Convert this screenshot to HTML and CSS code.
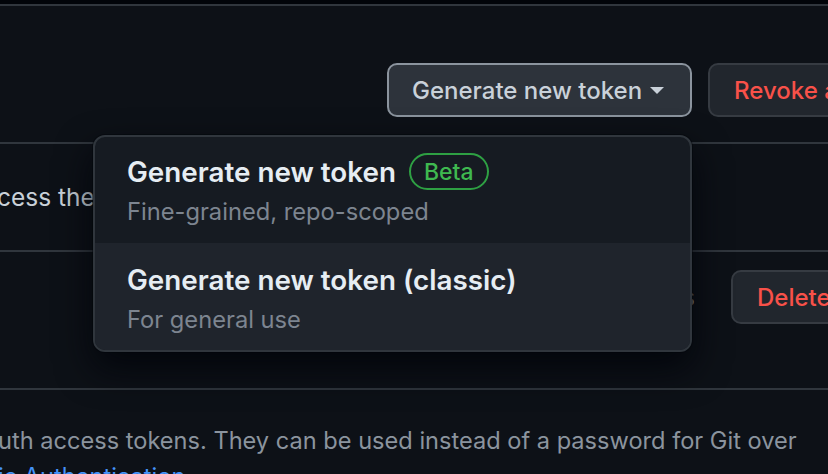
FILE: index.html
```html
<!DOCTYPE html>
<html lang="en">
<head>
<meta charset="utf-8">
<title>Personal access tokens</title>
<link rel="stylesheet" href="styles.css">
</head>
<body>
<div class="topbar"></div>
<main class="page">
  <section class="header">
    <div class="actions">
      <button class="btn btn-open">Generate new token <span class="caret"></span></button>
      <button class="btn btn-danger">Revoke all</button>
    </div>
  </section>
  <section class="row row-intro">
    <p class="intro">cess the</p>
  </section>
  <section class="row row-token">
    <span class="meta">s</span>
    <button class="btn btn-danger btn-delete">Delete</button>
  </section>
  <section class="note">
    <p>uth access tokens. They can be used instead of a password for Git over</p>
    <p><a href="#" class="link">ic Authentication</a></p>
  </section>
</main>

<div class="menu">
  <div class="menu-item">
    <div class="menu-title">Generate new token <span class="badge">Beta</span></div>
    <div class="menu-sub">Fine-grained, repo-scoped</div>
  </div>
  <div class="menu-item menu-item-hover">
    <div class="menu-title">Generate new token (classic)</div>
    <div class="menu-sub">For general use</div>
  </div>
</div>
</body>
</html>
```

FILE: styles.css
```css
* { box-sizing: border-box; }
html, body {
  margin: 0;
  padding: 0;
  background: #0d1117;
  height: 474px;
  overflow: hidden;
  font-family: Inter, "Noto Sans", sans-serif;
  color: #c9d1d9;
}
.topbar {
  height: 6px;
  background: #010409;
  border-bottom: 2px solid #30363d;
}
.page {
  width: 1000px;
}
.header {
  height: 138px;
  padding-top: 57px;
  padding-left: 387px;
  border-bottom: 2px solid #30363d;
}
.actions {
  display: flex;
  gap: 16px;
}
.btn {
  font-family: inherit;
  height: 54px;
  border-radius: 10px;
  font-size: 24px;
  font-weight: 500;
  display: inline-flex;
  align-items: center;
  padding: 0 24px;
  white-space: nowrap;
  cursor: pointer;
}
.btn-open {
  background: #2d333b;
  border: 2px solid #8b949e;
  color: #c9d1d9;
  padding-left: 23px;
  padding-right: 26px;
  gap: 8px;
}
.caret {
  width: 0;
  height: 0;
  border-left: 7px solid transparent;
  border-right: 7px solid transparent;
  border-top: 7px solid #c9d1d9;
}
.btn-danger {
  background: #21262d;
  border: 2px solid #363b42;
  color: #f85149;
}
.row {
  border-bottom: 2px solid #30363d;
}
.row-intro {
  height: 108px;
  display: flex;
  align-items: center;
}
.intro {
  margin: 0 0 0 -3px;
  font-size: 24.5px;
  color: #c9d1d9;
}
.row-token {
  height: 138px;
  padding-top: 18px;
  display: flex;
  align-items: flex-start;
}
.meta {
  margin-left: 682px;
  margin-top: 12px;
  font-size: 24.5px;
  color: #8b949e;
  width: 49px;
}
.btn-delete {
  height: 54px;
}
.note {
  padding-top: 33px;
  font-size: 23.6px;
  color: #8b949e;
}
.note p {
  margin: 0 0 0 -2px;
  line-height: 36px;
  white-space: nowrap;
}
.link {
  color: #4493f8;
  text-decoration: none;
}
.menu {
  position: absolute;
  left: 93px;
  top: 135px;
  width: 599px;
  height: 217px;
  background: #161b22;
  border: 2px solid #30363d;
  border-radius: 12px;
  overflow: hidden;
  box-shadow: 0 16px 36px rgba(1, 4, 9, 0.85), 0 0 0 1px rgba(1,4,9,0.4);
}
.menu-item {
  height: 106px;
  padding: 16px 32px 0 32px;
}
.menu-item-hover {
  background: #1f242c;
  height: 111px;
  padding-top: 18px;
}
.menu-title {
  display: flex;
  align-items: center;
  gap: 13px;
  height: 37px;
  font-size: 27.8px;
  font-weight: 600;
  color: #e6edf3;
  white-space: nowrap;
}
.badge {
  display: inline-flex;
  align-items: center;
  height: 37px;
  padding: 0 13px;
  border: 2px solid #2ea043;
  border-radius: 20px;
  color: #3fb950;
  font-size: 23px;
  font-weight: 500;
}
.menu-sub {
  margin-top: 7px;
  font-size: 23.7px;
  line-height: 29px;
  color: #7d8590;
  white-space: nowrap;
}
```
